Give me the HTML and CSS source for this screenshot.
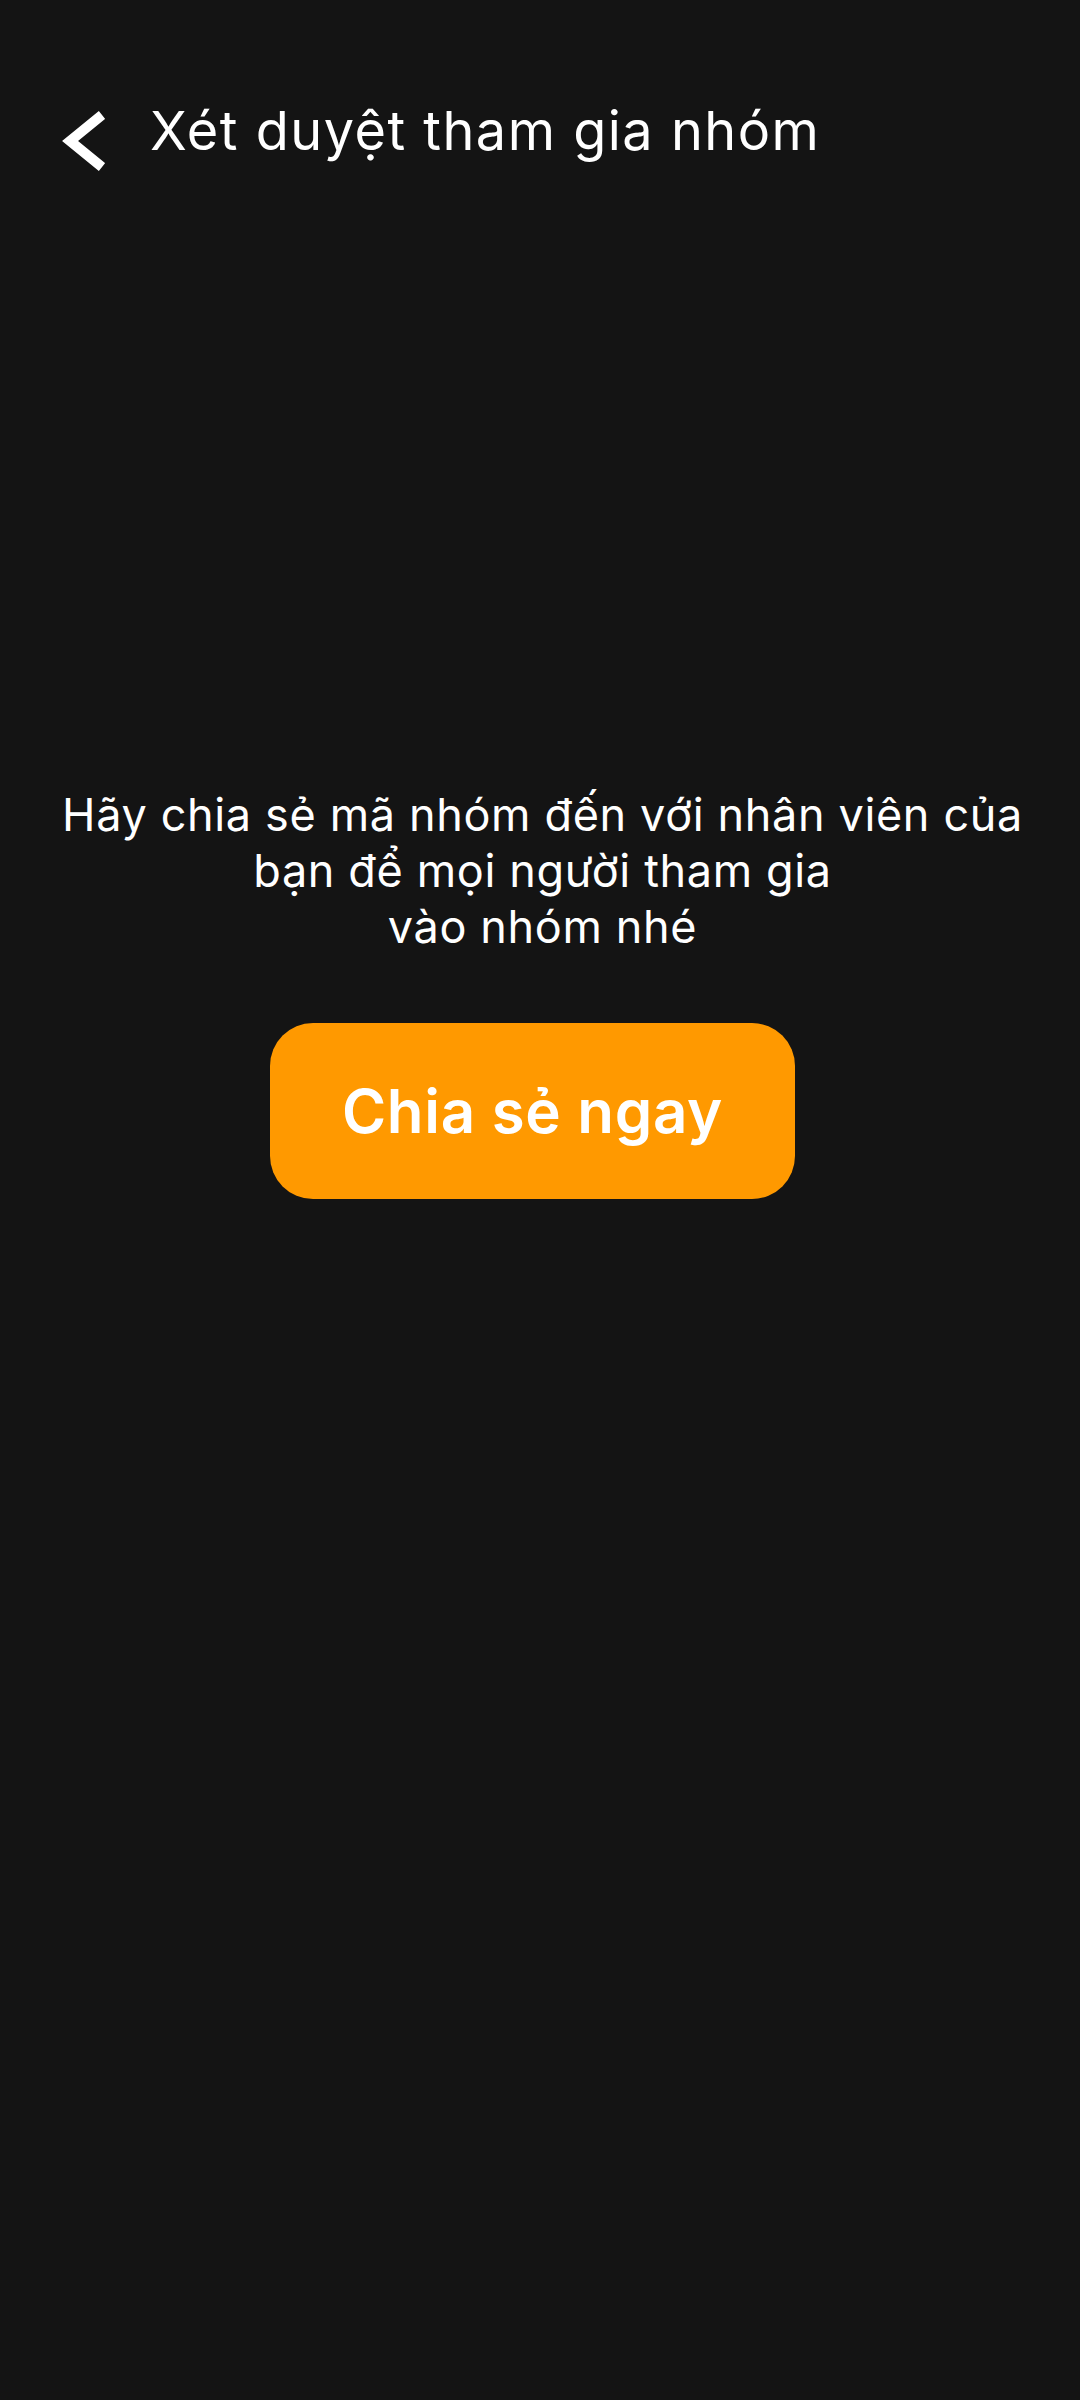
FILE: index.html
```html
<!DOCTYPE html>
<html lang="vi">
<head>
<meta charset="utf-8">
<title>Xét duyệt tham gia nhóm</title>
<link rel="stylesheet" href="styles.css">
</head>
<body>
<div class="screen">
  <header class="topbar">
    <svg class="back" viewBox="0 0 44 60" width="44" height="60" aria-hidden="true">
      <polyline points="41,4 9,30 41,56" fill="none" stroke="#ffffff" stroke-width="10" stroke-linecap="butt" stroke-linejoin="miter"/>
    </svg>
    <h1 class="title">Xét duyệt tham gia nhóm</h1>
  </header>
  <main class="content">
    <p class="message">Hãy chia sẻ mã nhóm đến với nhân viên của<br>bạn để mọi người tham gia<br>vào nhóm nhé</p>
    <div class="actions">
      <button class="share-btn" type="button">Chia sẻ ngay</button>
    </div>
  </main>
</div>
</body>
</html>
```

FILE: styles.css
```css
html, body {
  margin: 0;
  padding: 0;
  background: #141414;
}

body {
  width: 1080px;
  height: 2400px;
  font-family: "Inter", "Noto Sans", sans-serif;
  color: #ffffff;
}

.screen {
  display: flex;
  flex-direction: column;
}

.topbar {
  display: flex;
  align-items: flex-start;
  padding: 99px 0 0 61px;
}

.back {
  display: block;
  margin-top: 12px;
  flex: none;
}

.title {
  margin: 0 0 0 45px;
  font-size: 54px;
  font-weight: 400;
  line-height: 64px;
  letter-spacing: 1.5px;
}

.content {
  display: flex;
  flex-direction: column;
  padding-top: 616px;
}

.message {
  margin: 0;
  padding: 0 20px 0 25px;
  text-align: center;
  font-size: 45px;
  line-height: 56px;
  font-weight: 400;
  letter-spacing: 0.65px;
}

.actions {
  display: flex;
  padding: 68px 0 0 270px;
}

.share-btn {
  display: flex;
  align-items: center;
  justify-content: center;
  width: 525px;
  height: 176px;
  border: none;
  border-radius: 43px;
  background: #ff9900;
  color: #ffffff;
  font-family: "Inter", "Noto Sans", sans-serif;
  font-size: 60px;
  font-weight: 600;
  letter-spacing: 0.7px;
  padding: 0;
}
```
